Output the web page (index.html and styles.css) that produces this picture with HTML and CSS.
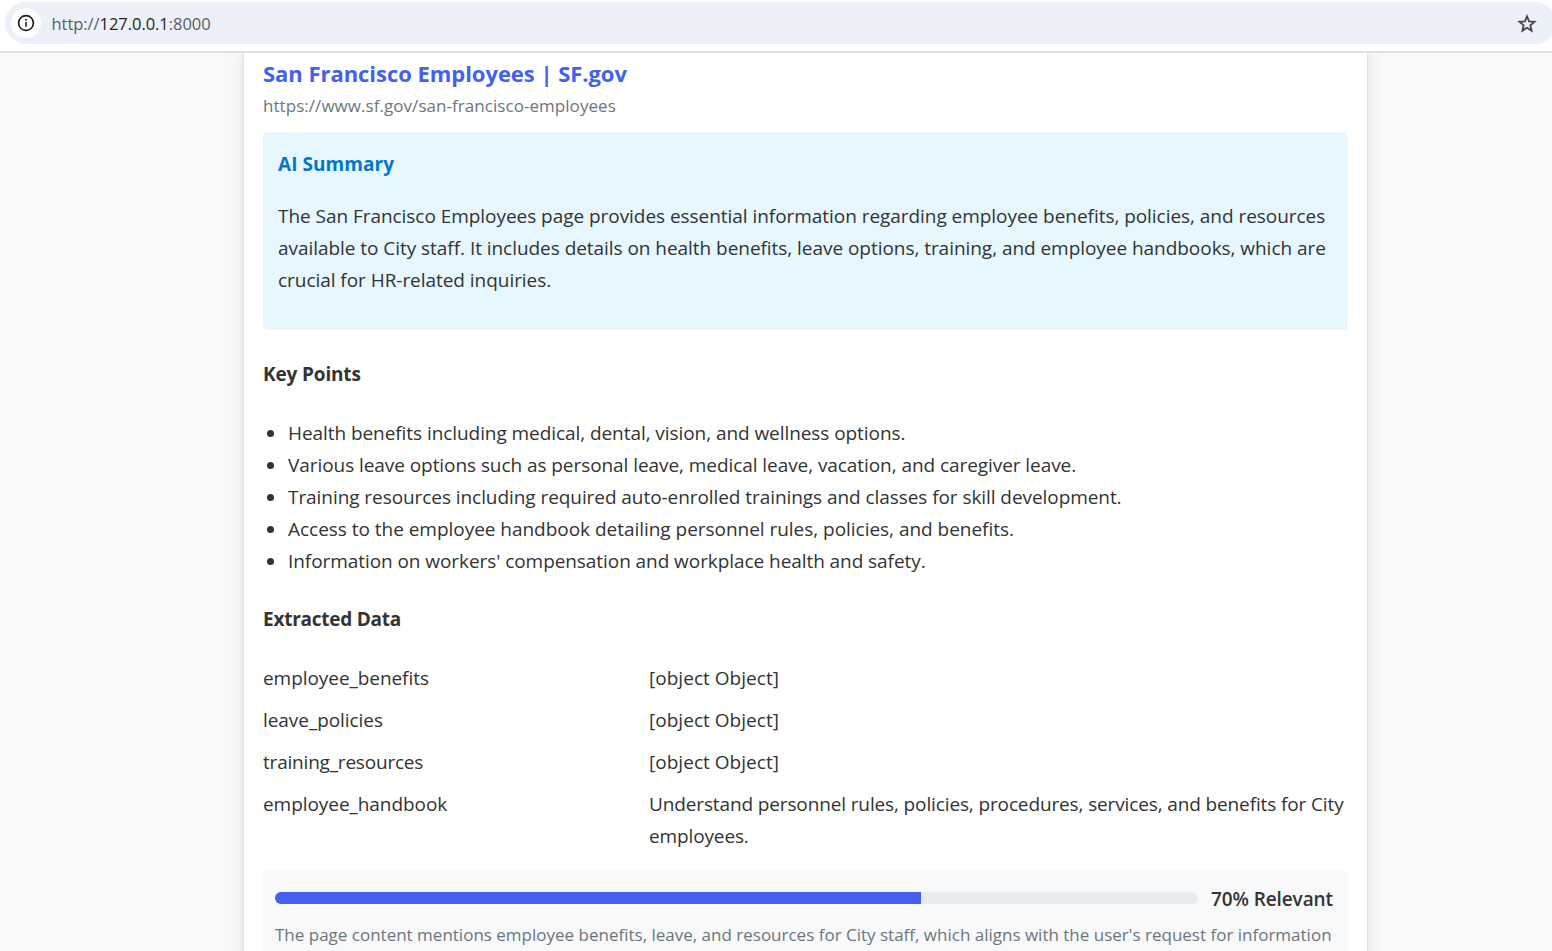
FILE: index.html
```
<!DOCTYPE html>
<html lang="en">
<head>
<meta charset="utf-8">
<title>San Francisco Employees</title>
<link rel="stylesheet" href="styles.css">
</head>
<body>
<header class="toolbar">
  <div class="omnibox">
    <span class="site-info">
      <svg width="18" height="18" viewBox="0 0 18 18"><circle cx="9" cy="9" r="7.4" fill="none" stroke="#1f1f1f" stroke-width="1.7"/><path d="M8.2 8h1.6v4.7H8.2zM8.2 5.1h1.6v1.7H8.2z" fill="#1f1f1f"/></svg>
    </span>
    <span class="address">http://<span class="host">127.0.0.1</span>:8000</span>
    <svg class="star" width="20" height="20" viewBox="0 0 20 20"><path d="M10 2.3l2.05 5.1 5.5.42-4.22 3.55 1.32 5.35L10 13.8l-4.65 2.92 1.32-5.35L2.45 7.82l5.5-.42z" fill="none" stroke="#474747" stroke-width="1.8"/></svg>
  </div>
</header>
<main class="page">
  <article class="card">
    <h2 class="title">San Francisco Employees | SF.gov</h2>
    <div class="url">https://www.sf.gov/san-francisco-employees</div>
    <section class="summary">
      <h3 class="heading summary-heading">AI Summary</h3>
      <p class="summary-text">The San Francisco Employees page provides essential information regarding employee benefits, policies, and resources<br>available to City staff. It includes details on health benefits, leave options, training, and employee handbooks, which are<br>crucial for HR-related inquiries.</p>
    </section>
    <h3 class="heading key-heading">Key Points</h3>
    <ul class="points">
      <li>Health benefits including medical, dental, vision, and wellness options.</li>
      <li>Various leave options such as personal leave, medical leave, vacation, and caregiver leave.</li>
      <li>Training resources including required auto-enrolled trainings and classes for skill development.</li>
      <li class="wide">Access to the employee handbook detailing personnel rules, policies, and benefits.</li>
      <li>Information on workers' compensation and workplace health and safety.</li>
    </ul>
    <h3 class="heading data-heading">Extracted Data</h3>
    <div class="data">
      <div class="key">employee_benefits</div><div class="object">[object Object]</div>
      <div class="key">leave_policies</div><div class="object">[object Object]</div>
      <div class="key tight">training_resources</div><div class="object">[object Object]</div>
      <div class="key">employee_handbook</div><div class="value">Understand personnel rules, policies, procedures, services, and benefits for City<br>employees.</div>
    </div>
    <section class="relevance">
      <div class="meter">
        <div class="track"><div class="fill" style="width:70%"></div></div>
        <span class="score">70% Relevant</span>
      </div>
      <p class="note">The page content mentions employee benefits, leave, and resources for City staff, which aligns with the user's request for information</p>
    </section>
  </article>
</main>
</body>
</html>
```
FILE: styles.css
```
* { box-sizing: border-box; }
html, body { height: 100%; overflow: hidden; }
body {
  margin: 0;
  display: flex;
  flex-direction: column;
  background: #f8f9fb;
  color: #333;
  font: 19px/32px "Open Sans", "Noto Sans", sans-serif;
  letter-spacing: -.06px;
}
h2, h3, p, ul { margin: 0; padding: 0; }

.toolbar {
  flex: none;
  height: 53px;
  padding: 2px 0 0 5px;
  background: #fff;
  border-bottom: 2px solid #e0e0e0;
}
.omnibox {
  display: flex;
  align-items: center;
  height: 42px;
  width: 1551px;
  padding: 0 18px 0 6px;
  border-radius: 21px;
  background: #ecf0f9;
}
.site-info {
  display: flex;
  align-items: center;
  justify-content: center;
  width: 30px;
  height: 30px;
  border-radius: 50%;
  background: #fff;
}
.address {
  flex: 1;
  margin-left: 10.5px;
  padding-top: 2px;
  color: #5a5d62;
  font-size: 16.5px;
  letter-spacing: -.05px;
}
.host { color: #1f1f1f; }
.star { flex: none; margin: 1px 1px 0 0; }

.page { flex: 1; min-height: 0; padding-left: 244px; overflow: hidden; }
.card {
  width: 1123px;
  height: 1000px;
  padding: 4px 19px 0;
  background: #fff;
  box-shadow: 0 0 2px rgba(0,0,0,.18), 0 0 18px rgba(0,0,0,.1);
}
.title {
  color: #4361ee;
  font-size: 22px;
  line-height: 32px;
  letter-spacing: -.04px;
}
.url { margin-top: 1px; color: #6c757d; font-size: 17px; letter-spacing: .05px; }
.summary {
  margin-top: 10px;
  height: 198px;
  padding: 16px 15px 0;
  border-radius: 5px;
  background: #e6f7ff;
}
.heading { font-size: 19px; line-height: 32px; font-weight: 700; letter-spacing: -.15px; }
.summary-heading { color: #0077cc; letter-spacing: .05px; }
.summary-text { margin-top: 20px; letter-spacing: -.045px; white-space: nowrap; }
.key-heading { margin-top: 28px; }
.points { margin-top: 27px; list-style: none; letter-spacing: -.066px; }
.points li { display: flex; align-items: center; }
.points li::before {
  content: "";
  width: 7px;
  height: 7px;
  margin: 1px 14px 0 4px;
  border-radius: 50%;
  background: #333;
}
.points .wide { letter-spacing: -.03px; }
.data-heading { margin-top: 26px; letter-spacing: -.24px; }
.data {
  display: grid;
  grid-template-columns: 386px 1fr;
  row-gap: 10px;
  margin-top: 27px;
  white-space: nowrap;
}
.key.tight { letter-spacing: -.2px; }
.object { letter-spacing: .03px; }
.value { letter-spacing: -.128px; }
.relevance {
  margin-top: 18px;
  height: 130px;
  padding: 13px 12px 0;
  border-radius: 5px;
  background: #f8f9fa;
}
.meter { display: flex; align-items: center; }
.track {
  width: 923px;
  height: 12px;
  margin-bottom: 2px;
  border-radius: 6px;
  background: #e9ecef;
  overflow: hidden;
}
.fill { height: 100%; background: #4361ee; }
.score { margin-left: 13px; font-weight: 600; letter-spacing: -.1px; white-space: nowrap; }
.note {
  margin-top: 6px;
  color: #6c757d;
  font-size: 17px;
  line-height: 27px;
  letter-spacing: 0;
  white-space: nowrap;
}
```
